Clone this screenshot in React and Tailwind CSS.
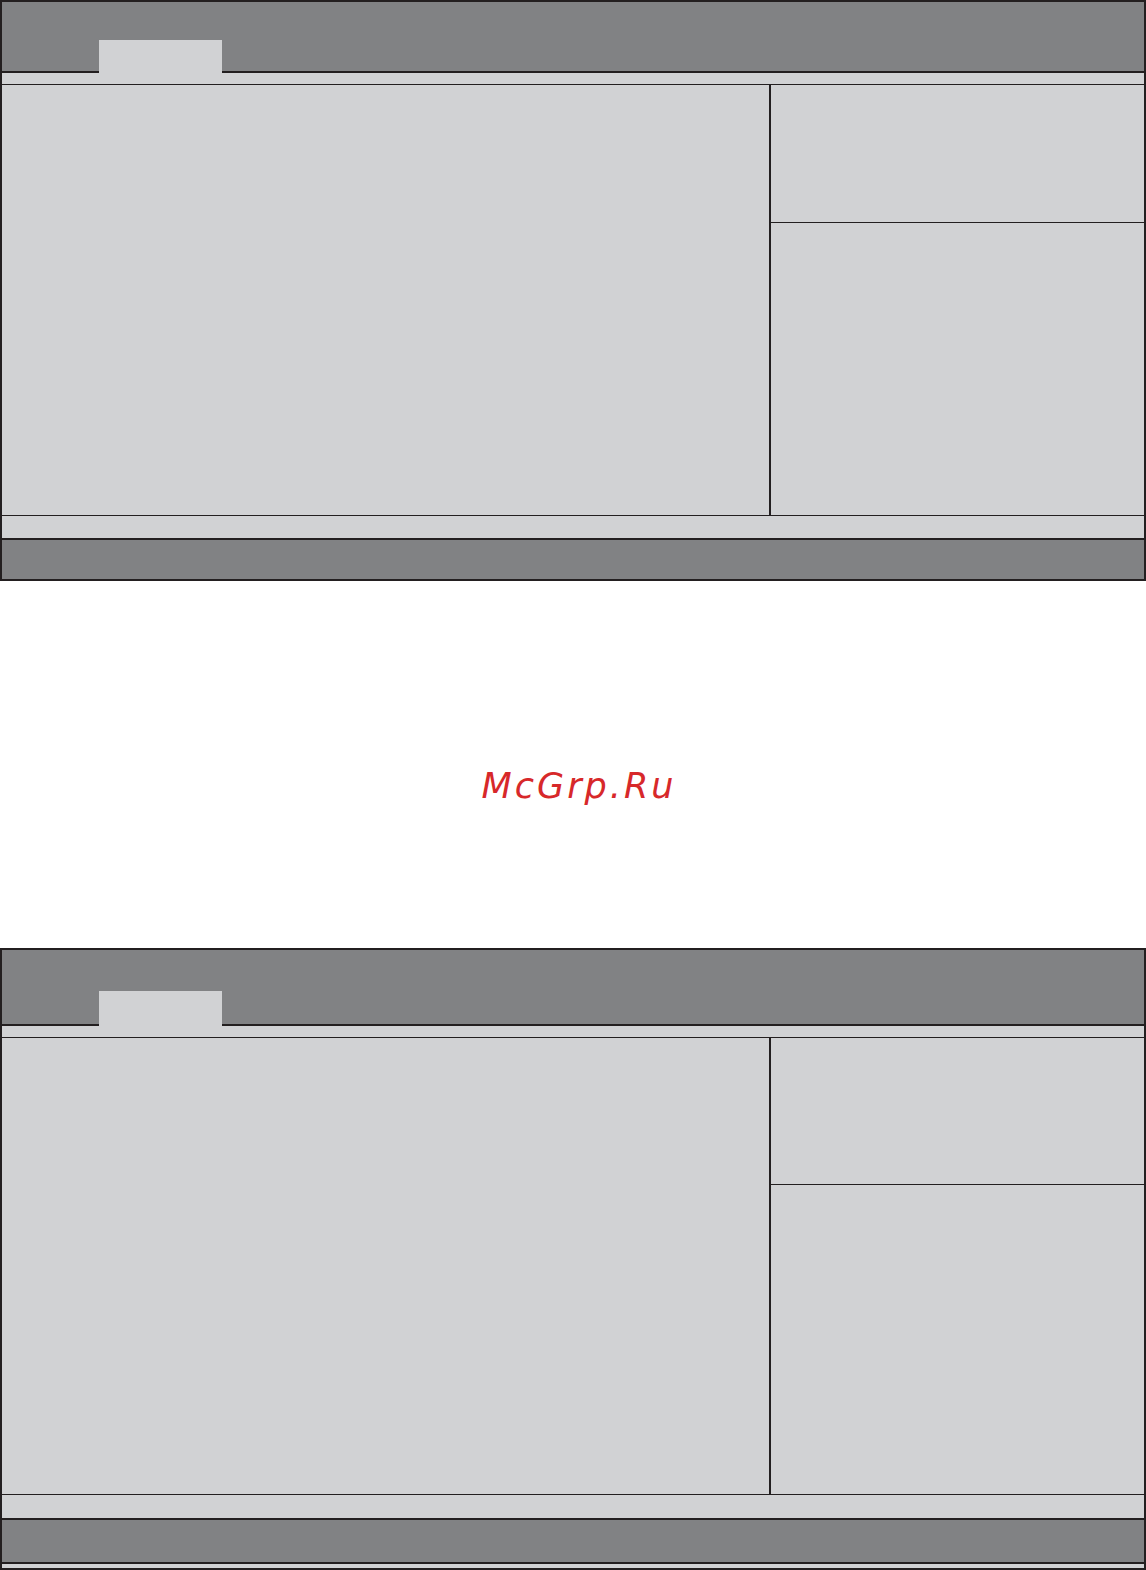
import React from 'react';

const dark = 'border-[#231f20]';

function Panel({ head, tabTop, main, infoTop, strip, foot, tail }) {
  return (
    <div className={`border-2 ${dark} bg-[#d1d2d4] w-[1146px]`}>
      {/* title bar with the single light tab */}
      <div className="flex items-end bg-[#818284]" style={{ height: head }}>
        <div className={`w-[97px] border-b-2 ${dark}`} />
        <div className="w-[123px] bg-[#d1d2d4]" style={{ height: head - tabTop }} />
        <div className={`flex-1 border-b-2 ${dark}`} />
      </div>
      <div className={`h-[12px] border-b ${dark}`} />

      {/* main area: item list on the left, help column on the right */}
      <div className={`flex border-b ${dark}`} style={{ height: main }}>
        <div className={`w-[769px] border-r-2 ${dark}`} />
        <div className="flex-1 flex flex-col">
          <div className={`border-b ${dark}`} style={{ height: infoTop }} />
          <div className="flex-1" />
        </div>
      </div>

      <div className={`border-b-2 ${dark}`} style={{ height: strip }} />
      <div className="bg-[#818284]" style={{ height: foot }} />
      {tail ? <div className={`h-[6px] border-t-2 ${dark}`} /> : null}
    </div>
  );
}

export default function App() {
  return (
    <div className="w-[1146px] h-[1570px] bg-white overflow-hidden">
      <Panel head={71} tabTop={38} main={431} infoTop={138} strip={24} foot={39} />

      <div className="h-[367px] pt-[188px]">
        <p
          className="text-center text-[35px] leading-none italic tracking-[3px] text-[#d7282a] pl-[12px]"
          style={{ fontFamily: '"DejaVu Sans", Verdana, sans-serif' }}
        >
          McGrp.Ru
        </p>
      </div>

      <Panel head={76} tabTop={41} main={457} infoTop={147} strip={25} foot={42} tail />
    </div>
  );
}
